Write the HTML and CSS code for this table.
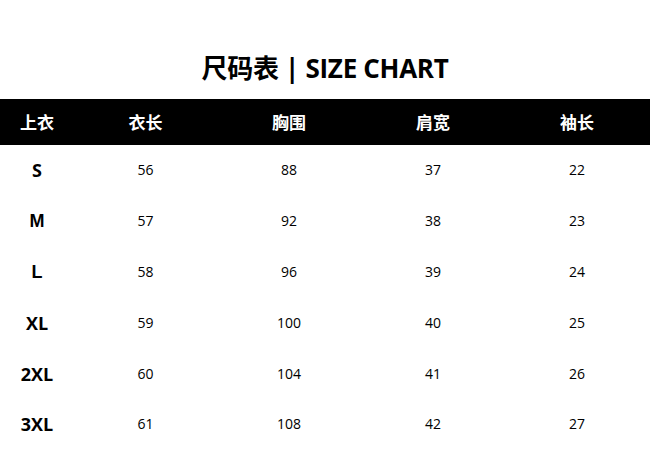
FILE: index.html
```html
<!DOCTYPE html>
<html lang="zh">
<head>
<meta charset="utf-8">
<link rel="stylesheet" href="styles.css">
</head>
<body>
<div class="page">
  <h1 class="title">尺码表 | SIZE CHART</h1>
  <div class="chart">
    <div class="row head">
      <div class="c c1">上衣</div><div class="c c2">衣长</div><div class="c">胸围</div><div class="c">肩宽</div><div class="c">袖长</div>
    </div>
    <div class="row"><div class="c c1 size">S</div><div class="c c2">56</div><div class="c">88</div><div class="c">37</div><div class="c">22</div></div>
    <div class="row"><div class="c c1 size alt">M</div><div class="c c2">57</div><div class="c">92</div><div class="c">38</div><div class="c">23</div></div>
    <div class="row"><div class="c c1 size alt">L</div><div class="c c2">58</div><div class="c">96</div><div class="c">39</div><div class="c">24</div></div>
    <div class="row"><div class="c c1 size">XL</div><div class="c c2">59</div><div class="c">100</div><div class="c">40</div><div class="c">25</div></div>
    <div class="row"><div class="c c1 size">2XL</div><div class="c c2">60</div><div class="c">104</div><div class="c">41</div><div class="c">26</div></div>
    <div class="row"><div class="c c1 size">3XL</div><div class="c c2">61</div><div class="c">108</div><div class="c">42</div><div class="c">27</div></div>
  </div>
</div>
</body>
</html>
```
FILE: styles.css
```css
html, body {
  margin: 0;
  padding: 0;
  background: #fff;
}
body {
  font-family: "Open Sans", "Noto Sans", "Noto Sans CJK SC", sans-serif;
  color: #000;
  width: 650px;
  height: 451px;
  overflow: hidden;
}
.title {
  margin: 0;
  height: 99px;
  box-sizing: border-box;
  padding-top: 50px;
  text-align: center;
  font-family: "Open Sans", "Noto Sans CJK SC", sans-serif;
  font-size: 26px;
  font-weight: 700;
  line-height: 36px;
  letter-spacing: -0.3px;
}
.chart {
  display: flex;
  flex-direction: column;
}
.row {
  display: grid;
  grid-template-columns: 74px 143px 144px 144px 144px;
  height: 50.8px;
  align-items: center;
}
.row.head {
  background: #000;
  color: #fff;
  height: 46px;
  font-family: "Noto Sans CJK SC", sans-serif;
  font-weight: 700;
  font-size: 17px;
}
.c {
  text-align: center;
  font-size: 14px;
  line-height: 20px;
}
.head .c {
  font-size: 17px;
}
.size {
  font-weight: 700;
  font-size: 18px;
}
.size.alt {
  font-family: "Liberation Sans", sans-serif;
}
```
